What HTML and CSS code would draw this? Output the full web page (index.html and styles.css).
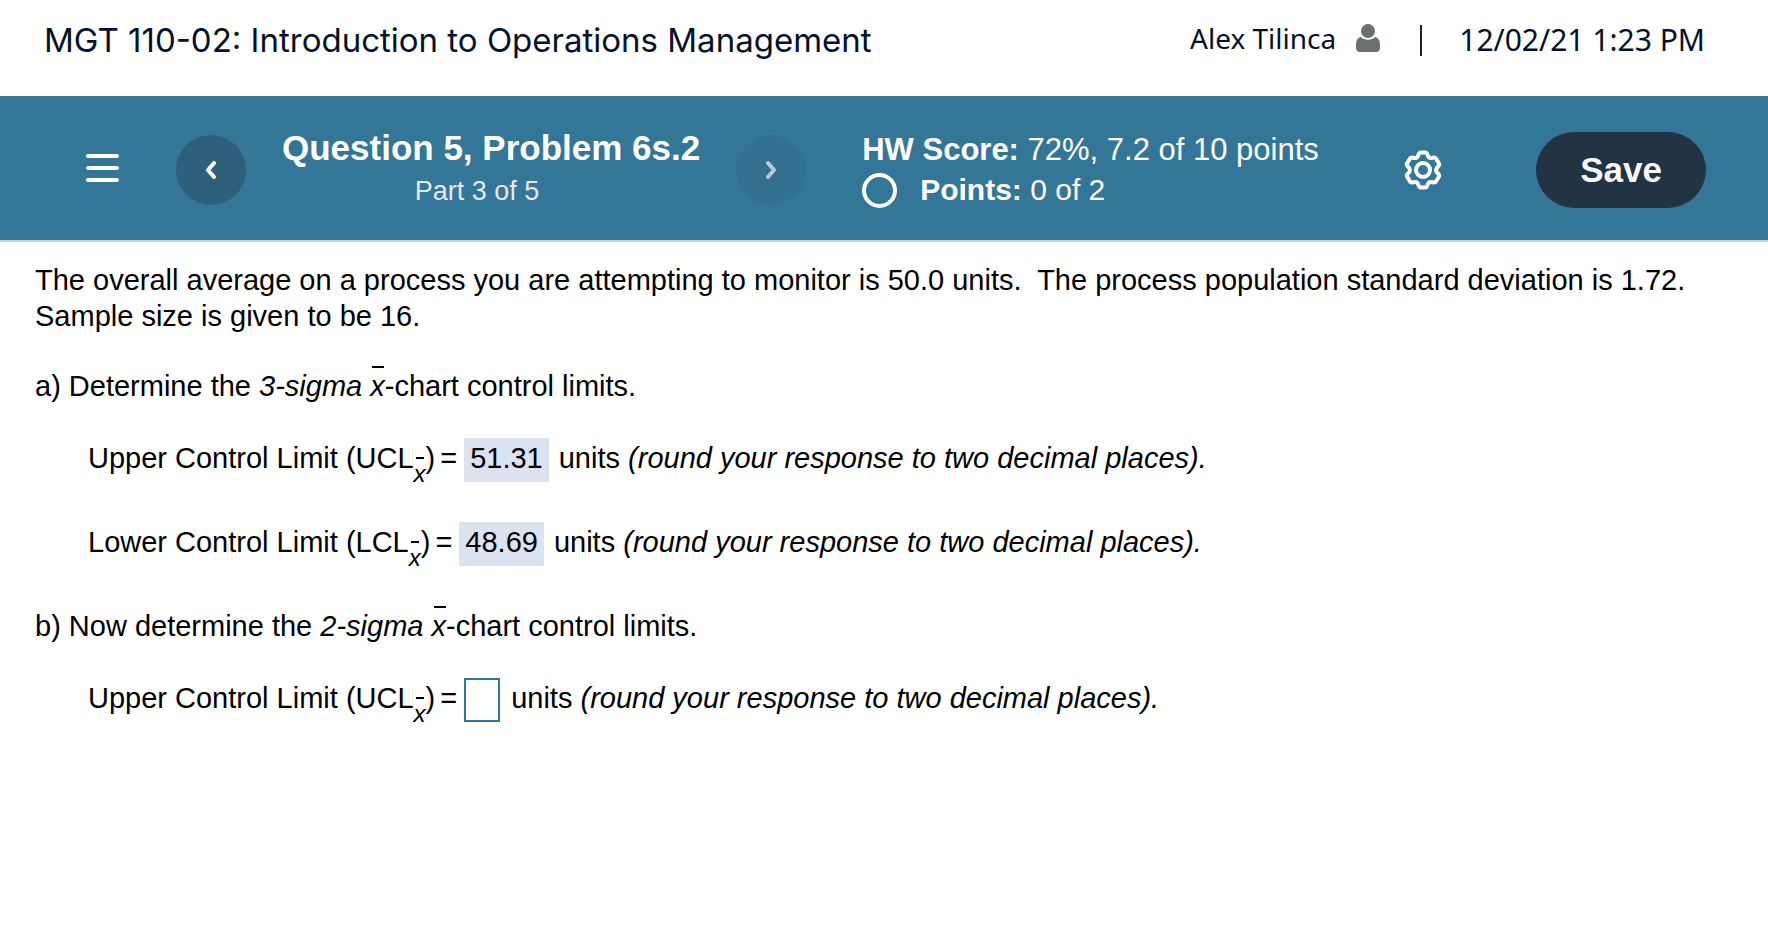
FILE: index.html
```html
<!DOCTYPE html>
<html lang="en">
<head>
    <meta charset="UTF-8">
    <meta name="viewport" content="width=device-width, initial-scale=1.0">
    <title>MGT 110-02: Introduction to Operations Management</title>
    <link rel="stylesheet" href="styles.css">
</head>
<body>
    <header class="header">
        <h1 class="course">MGT 110-02: Introduction to Operations Management</h1>
        <div class="account">
            <span class="user">Alex Tilinca</span>
            <svg class="user-icon" width="24" height="28" viewBox="0 0 24 28" aria-hidden="true">
                <circle cx="12" cy="7" r="7"/>
                <path d="M5 13C8 16.500 16 16.500 19 13C22.500 13.500 24 17 24 21V24C24 26.500 22.500 28 20 28H4C1.500 28 0 26.500 0 24V21C0 17 1.500 13.500 5 13Z"/>
            </svg>
            <span class="divider"></span>
            <time class="date">12/02/21 1:23 PM</time>
        </div>
    </header>

    <nav class="toolbar">
        <button class="icon-btn menu" aria-label="Menu">
            <svg width="34" height="30" viewBox="0 0 34 30"><path d="M2 3H31M2 15H31M2 27H31"/></svg>
        </button>
        <button class="arrow prev" aria-label="Previous">
            <svg width="12" height="18" viewBox="0 0 12 18"><path d="M9 2L3 9L9 16"/></svg>
        </button>
        <div class="question">
            <h2>Question 5, Problem 6s.2</h2>
            <p>Part 3 of 5</p>
        </div>
        <button class="arrow next" aria-label="Next" disabled>
            <svg width="12" height="18" viewBox="0 0 12 18"><path d="M3 2L9 9L3 16"/></svg>
        </button>
        <div class="score">
            <div class="total"><b>HW Score:</b> 72%, 7.2 of 10 points</div>
            <div class="points"><span class="ring"></span><span><b>Points:</b> 0 of 2</span></div>
        </div>
        <button class="icon-btn settings" aria-label="Settings">
            <svg width="40" height="40" viewBox="0 0 40 40">
                <path d="M17.500 2.500H22.500C25 2.500 24 8 27.500 8C30 8 31.500 6.500 33 8.500L36 13.500C37.500 16 33 16.500 33 20S37.500 24 36 26.500L33 31.500C31.500 33.500 30 32 27.500 32C24 32 25 37.500 22.500 37.500H17.500C15 37.500 16 32 12.500 32C10 32 8.500 33.500 7 31.500L4 26.500C2.500 24 7 23.500 7 20S2.500 16 4 13.500L7 8.500C8.500 6.500 10 8 12.500 8C16 8 15 2.500 17.500 2.500Z"/>
                <circle cx="20" cy="20" r="7"/>
            </svg>
        </button>
        <button class="save">Save</button>
    </nav>

    <main class="problem">
        <p>The overall average on a process you are attempting to monitor is 50.0 units.&nbsp; The process population standard deviation is 1.72. Sample size is given to be 16.</p>

        <p class="part">a) Determine the <i>3-sigma <span class="xbar">x</span></i>-chart control limits.</p>
        <div class="limit">
            <span>Upper Control Limit <span class="symbol">(UCL<i class="sub">x</i>)</span>=</span>
            <span class="answer">51.31</span>
            <span>units <i>(round your response to two decimal places).</i></span>
        </div>
        <div class="limit">
            <span>Lower Control Limit <span class="symbol">(LCL<i class="sub">x</i>)</span>=</span>
            <span class="answer">48.69</span>
            <span>units <i>(round your response to two decimal places).</i></span>
        </div>

        <p class="part">b) Now determine the <i>2-sigma <span class="xbar">x</span></i>-chart control limits.</p>
        <div class="limit">
            <label for="ucl">Upper Control Limit <span class="symbol">(UCL<i class="sub">x</i>)</span>=</label>
            <input class="answer-box" id="ucl" type="text">
            <span>units <i>(round your response to two decimal places).</i></span>
        </div>
    </main>
</body>
</html>
```
FILE: styles.css
```css
* { box-sizing: border-box; }
body { margin: 0; background: #fff; color: #000; font-family: "Liberation Sans", Arial, sans-serif; font-size: 29px; line-height: 36px; }
h1, h2, p { margin: 0; }
button { border: none; padding: 0; cursor: pointer; font-family: inherit; }
svg { display: block; }

.header { display: flex; justify-content: space-between; height: 96px; padding: 20px 63px 36px 44px; color: #05112a; }
.course { font-family: Inter, sans-serif; font-size: 33px; font-weight: 400; line-height: 40px; }
.account { display: flex; align-items: center; font-family: "Noto Sans", sans-serif; }
.user { font-size: 28px; line-height: 36px; margin-bottom: 4px; }
.user-icon { margin: 0 40px 4px 20px; fill: #6a7070; }
.divider { width: 2px; height: 31px; margin-right: 37px; background: #252525; }
.date { font-size: 30px; line-height: 40px; }

.toolbar { display: flex; align-items: center; height: 146px; padding: 4px 62px 0 86px; background: #347697; border-bottom: 2px solid #c7cfd9; color: #fff; }
.icon-btn { background: none; }
.icon-btn svg { fill: none; stroke: #fff; stroke-width: 4; stroke-linecap: round; }
.menu { margin: 0 56px 4px 0; }
.arrow { display: flex; align-items: center; justify-content: center; width: 70px; height: 70px; border-radius: 50%; background: #2e607c; }
.arrow svg { fill: none; stroke: #fff; stroke-width: 4; stroke-linecap: round; stroke-linejoin: round; }
.next { background: #33708f; }
.next svg { stroke: #b4cbd8; }
.question { margin: 0 36px 2px; text-align: center; }
.question h2 { font-size: 35px; line-height: 44px; }
.question p { padding-right: 28px; font-size: 27px; line-height: 42px; color: #e4e8f2; }
.score { margin-left: 56px; font-size: 30px; line-height: 40px; }
.total { font-size: 31px; }
.points { display: flex; align-items: center; gap: 23px; }
.ring { width: 35px; height: 35px; border: 4px solid #fff; border-radius: 50%; }
.settings { margin-left: auto; }
.save { width: 170px; height: 76px; margin-left: 93px; border-radius: 38px; background: #223344; color: #f8f9ff; font-size: 35px; font-weight: bold; }

.problem { padding: 20px 35px; }
.part { margin: 34px 0; }
.limit + .part { margin-top: 42px; }
.xbar { position: relative; }
.xbar::before { content: ""; position: absolute; left: 2px; top: -4px; width: 12px; height: 2px; background: #000; }
.limit { display: flex; align-items: baseline; height: 44px; margin: 0 0 40px 53px; }
.symbol { margin-right: 5px; }
.sub { position: relative; display: inline-block; font-size: 24px; line-height: 0; vertical-align: -14px; }
.sub::before { content: ""; position: absolute; left: 2px; top: -17px; width: 8px; height: 2px; background: #000; }
.answer { margin: 0 10px 0 7px; padding: 2px 6px 6px; background: #dbe2f0; }
.answer-box { width: 36px; height: 44px; margin: 0 11px 0 7px; padding: 0 4px 4px; border: 2px solid #347697; font: inherit; }
```
